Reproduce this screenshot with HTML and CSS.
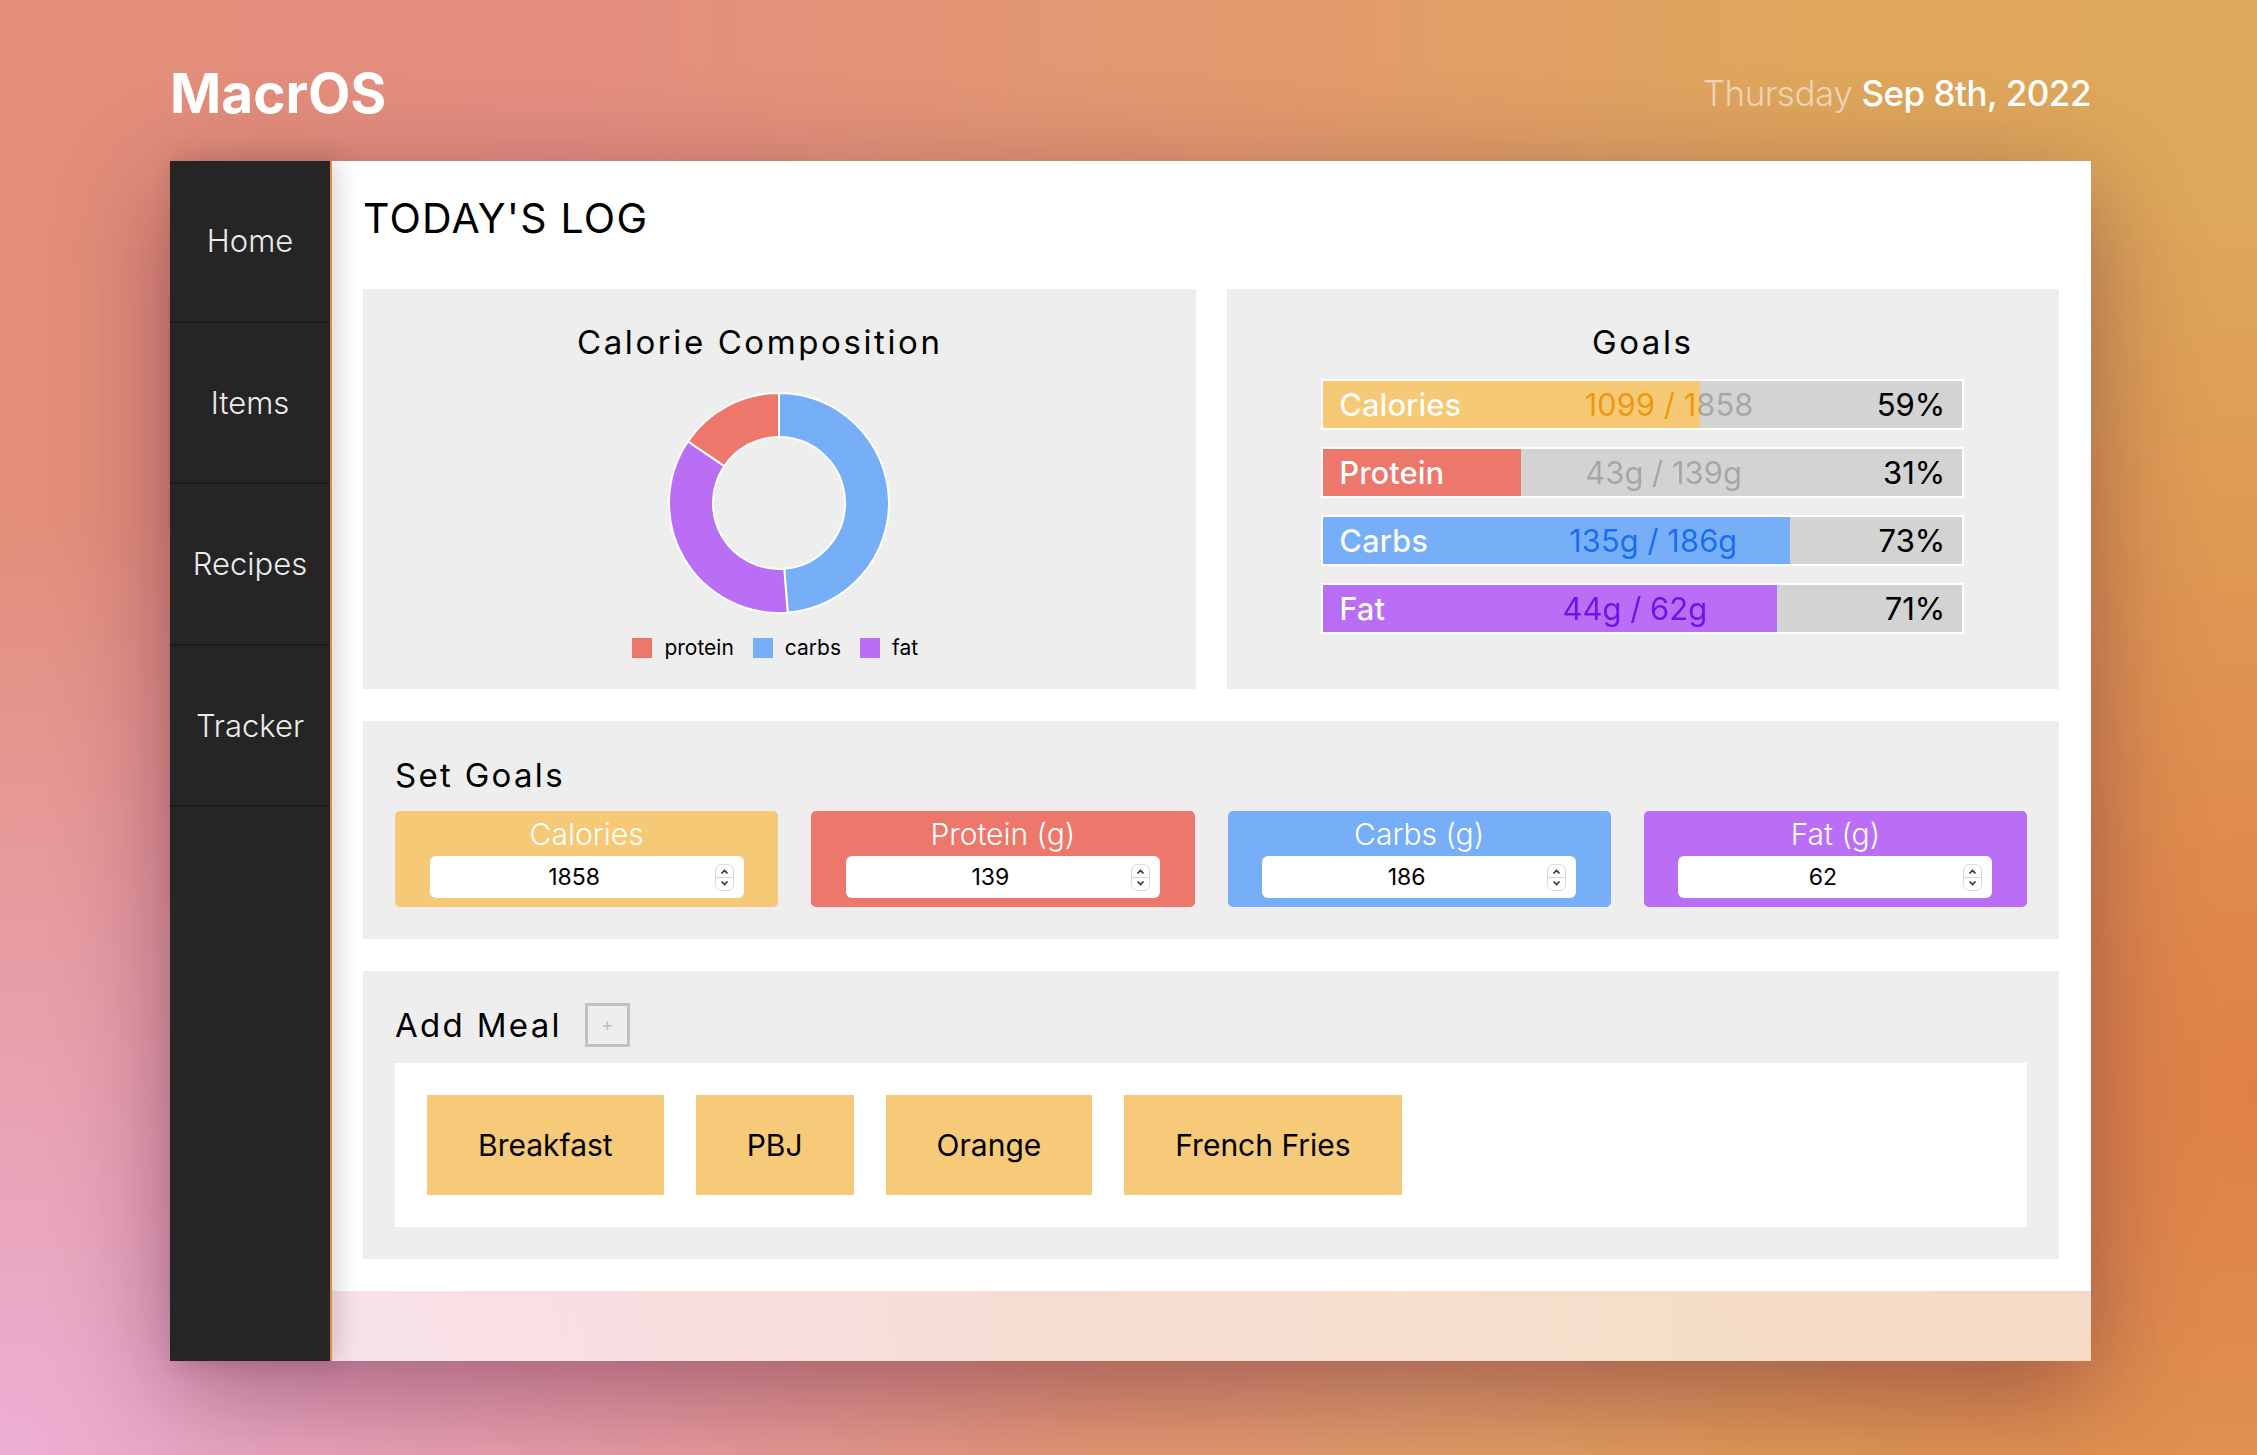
FILE: index.html
```html
<!DOCTYPE html>
<html lang="en">
<head>
<meta charset="utf-8">
<title>MacrOS</title>
<link rel="stylesheet" href="styles.css">
</head>
<body>
<div class="page">
  <header class="top">
    <div class="brand">MacrOS</div>
    <div class="date"><span class="day">Thursday</span> <span class="dt">Sep 8th, 2022</span></div>
  </header>
  <div class="card">
    <nav class="sidebar">
      <a class="nav-item">Home</a>
      <a class="nav-item">Items</a>
      <a class="nav-item">Recipes</a>
      <a class="nav-item">Tracker</a>
    </nav>
    <main class="main">
      <h1 class="page-title">TODAY'S LOG</h1>
      <div class="top-grid">
        <section class="panel chart-panel">
          <h2 class="panel-title chart-title">Calorie Composition</h2>
          <svg class="donut" width="224" height="224" viewBox="0 0 224 224">
            <path fill="#76aff8" stroke="#fff" stroke-width="2" d="M112 2 A110 110 0 0 1 120.72 221.65 L117.23 177.79 A66 66 0 0 0 112 46 Z"/>
            <path fill="#b96ef5" stroke="#fff" stroke-width="2" d="M120.72 221.65 A110 110 0 0 1 20.91 50.33 L57.35 75.0 A66 66 0 0 0 117.23 177.79 Z"/>
            <path fill="#ee776b" stroke="#fff" stroke-width="2" d="M20.91 50.33 A110 110 0 0 1 112 2 L112 46 A66 66 0 0 0 57.35 75.0 Z"/>
          </svg>
          <div class="legend">
            <span class="lg"><i class="sw sw-protein"></i>protein</span>
            <span class="lg"><i class="sw sw-carbs"></i>carbs</span>
            <span class="lg"><i class="sw sw-fat"></i>fat</span>
          </div>
        </section>
        <section class="panel goals-panel">
          <h2 class="panel-title">Goals</h2>
          <div class="bars">
            <div class="bar b-cal" style="--p:59%">
              <div class="bar-fill"></div>
              <div class="bar-row"><span class="bl">Calories</span><span class="bv">1099 / 1858</span><span class="bp">59%</span></div>
            </div>
            <div class="bar b-pro" style="--p:31%">
              <div class="bar-fill"></div>
              <div class="bar-row"><span class="bl">Protein</span><span class="bv">43g / 139g</span><span class="bp">31%</span></div>
            </div>
            <div class="bar b-carb" style="--p:73%">
              <div class="bar-fill"></div>
              <div class="bar-row"><span class="bl">Carbs</span><span class="bv">135g / 186g</span><span class="bp">73%</span></div>
            </div>
            <div class="bar b-fat" style="--p:71%">
              <div class="bar-fill"></div>
              <div class="bar-row"><span class="bl">Fat</span><span class="bv">44g / 62g</span><span class="bp">71%</span></div>
            </div>
          </div>
        </section>
      </div>

      <section class="panel set-panel">
        <h2 class="section-title">Set Goals</h2>
        <div class="goal-grid">
          <div class="goal-card c-cal">
            <div class="goal-label">Calories</div>
            <div class="field"><span class="fv">1858</span><span class="spin"><svg width="19" height="27" viewBox="0 0 19 27"><rect x="0.5" y="0.5" width="18" height="26" rx="6" fill="#fff" stroke="#d6d6d6"/><line x1="1" y1="13.5" x2="18" y2="13.5" stroke="#d6d6d6"/><path d="M6.5 9.5 L9.5 6.5 L12.5 9.5" fill="none" stroke="#333" stroke-width="1.6"/><path d="M6.5 17.5 L9.5 20.5 L12.5 17.5" fill="none" stroke="#333" stroke-width="1.6"/></svg></span></div>
          </div>
          <div class="goal-card c-pro">
            <div class="goal-label">Protein (g)</div>
            <div class="field"><span class="fv">139</span><span class="spin"><svg width="19" height="27" viewBox="0 0 19 27"><rect x="0.5" y="0.5" width="18" height="26" rx="6" fill="#fff" stroke="#d6d6d6"/><line x1="1" y1="13.5" x2="18" y2="13.5" stroke="#d6d6d6"/><path d="M6.5 9.5 L9.5 6.5 L12.5 9.5" fill="none" stroke="#333" stroke-width="1.6"/><path d="M6.5 17.5 L9.5 20.5 L12.5 17.5" fill="none" stroke="#333" stroke-width="1.6"/></svg></span></div>
          </div>
          <div class="goal-card c-carb">
            <div class="goal-label">Carbs (g)</div>
            <div class="field"><span class="fv">186</span><span class="spin"><svg width="19" height="27" viewBox="0 0 19 27"><rect x="0.5" y="0.5" width="18" height="26" rx="6" fill="#fff" stroke="#d6d6d6"/><line x1="1" y1="13.5" x2="18" y2="13.5" stroke="#d6d6d6"/><path d="M6.5 9.5 L9.5 6.5 L12.5 9.5" fill="none" stroke="#333" stroke-width="1.6"/><path d="M6.5 17.5 L9.5 20.5 L12.5 17.5" fill="none" stroke="#333" stroke-width="1.6"/></svg></span></div>
          </div>
          <div class="goal-card c-fat">
            <div class="goal-label">Fat (g)</div>
            <div class="field"><span class="fv">62</span><span class="spin"><svg width="19" height="27" viewBox="0 0 19 27"><rect x="0.5" y="0.5" width="18" height="26" rx="6" fill="#fff" stroke="#d6d6d6"/><line x1="1" y1="13.5" x2="18" y2="13.5" stroke="#d6d6d6"/><path d="M6.5 9.5 L9.5 6.5 L12.5 9.5" fill="none" stroke="#333" stroke-width="1.6"/><path d="M6.5 17.5 L9.5 20.5 L12.5 17.5" fill="none" stroke="#333" stroke-width="1.6"/></svg></span></div>
          </div>
        </div>
      </section>

      <section class="panel meal-panel">
        <div class="meal-head">
          <h2 class="section-title">Add Meal</h2>
          <button class="plus-btn">+</button>
        </div>
        <div class="meal-box">
          <button class="meal">Breakfast</button>
          <button class="meal">PBJ</button>
          <button class="meal">Orange</button>
          <button class="meal">French Fries</button>
        </div>
      </section>
    </main>
  </div>
</div>
</body>
</html>
```

FILE: styles.css
```css
* { box-sizing: border-box; }

html, body {
  margin: 0;
  padding: 0;
}

body {
  width: 2257px;
  height: 1455px;
  overflow: hidden;
  font-family: Inter, "Noto Sans", "Liberation Sans", sans-serif;
  background:
    radial-gradient(ellipse 1100px 950px at 0% 100%, rgba(236, 174, 212, 1) 0%, rgba(236, 174, 212, 0) 100%),
    radial-gradient(ellipse 900px 900px at 100% 75%, rgba(224, 128, 72, 1) 0%, rgba(224, 128, 72, 0) 100%),
    linear-gradient(90deg, #e28e78 0%, #e48e80 25%, #e39a6e 55%, #dfa65c 80%, #dea95a 100%);
}

.page {
  width: 1921px;
  margin-left: 170px;
}

.top {
  height: 161px;
  padding-top: 25px;
  display: flex;
  align-items: center;
  justify-content: space-between;
}

.brand {
  color: #fff;
  font-size: 55px;
  font-weight: 700;
}

.date {
  font-size: 35px;
  letter-spacing: -0.5px;
  color: #fff;
}

.date .day {
  font-weight: 300;
  color: rgba(255, 255, 255, 0.55);
}

.date .dt {
  font-weight: 500;
}

.card {
  display: flex;
  height: 1200px;
  background: rgba(255, 255, 255, 0.68);
  box-shadow: 0 30px 100px rgba(80, 20, 60, 0.45);
}

.sidebar {
  position: relative;
  z-index: 2;
  width: 162px;
  flex: none;
  background: #252525;
  border-right: 2px solid #ec8a3a;
  box-shadow: 6px 0 22px rgba(0, 0, 0, 0.16);
  display: flex;
  flex-direction: column;
}

.nav-item {
  height: 161.6px;
  display: flex;
  align-items: center;
  justify-content: center;
  color: #ececec;
  font-size: 31px;
  font-weight: 300;
  border-bottom: 2px solid #1b1b1b;
}

.main {
  flex: 1;
  align-self: flex-start;
  background: #fff;
  padding: 32px 32px 32px 31px;
}

.page-title {
  margin: 0 0 46px;
  font-size: 41px;
  line-height: 50px;
  font-weight: 400;
  letter-spacing: 1.2px;
  color: #000;
}

.top-grid {
  display: grid;
  grid-template-columns: 1fr 1fr;
  gap: 31px;
  height: 400px;
}

.panel {
  background: #eeeeee;
}

.chart-panel,
.goals-panel {
  padding-top: 33px;
  display: flex;
  flex-direction: column;
  align-items: center;
}

.panel-title {
  margin: 0;
  font-size: 33px;
  line-height: 40px;
  font-weight: 400;
  letter-spacing: 2.6px;
  color: #000;
}

.chart-title {
  padding-right: 39px;
}

.donut {
  display: block;
  margin-top: 29px;
}

.legend {
  display: flex;
  align-items: center;
  gap: 19px;
  margin-top: 20px;
  margin-right: 8px;
  font-size: 21px;
  color: #000;
}

.lg {
  display: flex;
  align-items: center;
  gap: 12px;
}

.sw {
  width: 20px;
  height: 20px;
  display: block;
}

.sw-protein { background: #ee776b; }
.sw-carbs { background: #76aff8; }
.sw-fat { background: #b96ef5; }

.bars {
  margin-top: 17px;
  display: flex;
  flex-direction: column;
  gap: 17px;
}

.bar {
  position: relative;
  width: 643px;
  height: 51px;
  border: 2px solid #fff;
  background: #d3d3d3;
}

.bar-fill {
  position: absolute;
  top: 0;
  left: 0;
  height: 47px;
  width: var(--p);
}

.bar-row {
  position: relative;
  width: 639px;
  height: 47px;
  display: flex;
  align-items: center;
  justify-content: space-between;
  padding: 0 17px 0 16px;
  font-size: 31px;
  line-height: 47px;
  color: transparent;
  -webkit-background-clip: text;
  background-clip: text;
}

.bl {
  color: #fff;
  font-weight: 550;
}

.bp {
  color: #000;
}

.b-cal .bar-fill { background: #f6c977; }
.b-pro .bar-fill { background: #ee776b; }
.b-carb .bar-fill { background: #76aff8; }
.b-fat .bar-fill { background: #b96ef5; }

.b-cal .bar-row { background-image: linear-gradient(90deg, #ef960c 0, #ef960c var(--p), #a6a6a6 var(--p), #a6a6a6 100%); }
.b-pro .bar-row { background-image: linear-gradient(90deg, #d8453a 0, #d8453a var(--p), #a6a6a6 var(--p), #a6a6a6 100%); }
.b-carb .bar-row { background-image: linear-gradient(90deg, #1a6cf2 0, #1a6cf2 var(--p), #a6a6a6 var(--p), #a6a6a6 100%); }
.b-fat .bar-row { background-image: linear-gradient(90deg, #7410ea 0, #7410ea var(--p), #a6a6a6 var(--p), #a6a6a6 100%); }

.c-cal { background: #f6c977; }
.c-pro { background: #ee776b; }
.c-carb { background: #76aff8; }
.c-fat { background: #b96ef5; }

.set-panel {
  margin-top: 32px;
  padding: 34px 32px 32px;
}

.section-title {
  margin: 0;
  font-size: 33px;
  line-height: 40px;
  font-weight: 400;
  letter-spacing: 2.3px;
  color: #000;
}

.goal-grid {
  margin-top: 16px;
  display: grid;
  grid-template-columns: repeat(4, 1fr);
  gap: 33px;
}

.goal-card {
  border-radius: 5px;
  padding: 5px 0 9px;
  display: flex;
  flex-direction: column;
  align-items: center;
}

.goal-label {
  color: #fff;
  font-size: 30px;
  line-height: 36px;
  font-weight: 300;
}

.field {
  margin-top: 4px;
  width: 314px;
  height: 42px;
  background: #fff;
  border-radius: 6px;
  display: flex;
  align-items: center;
  padding: 0 10px 0 4px;
}

.fv {
  flex: 1;
  text-align: center;
  font-size: 23px;
  color: #000;
}

.spin {
  display: block;
  width: 19px;
  height: 27px;
}

.spin svg {
  display: block;
}

.meal-panel {
  margin-top: 32px;
  padding: 32px;
}

.meal-head {
  display: flex;
  align-items: center;
  gap: 23px;
  height: 44px;
}

.plus-btn {
  width: 45px;
  height: 44px;
  border: 3px solid #c2c2c2;
  background: transparent;
  color: #bdbdbd;
  font-family: inherit;
  font-size: 18px;
  padding: 0;
  line-height: 1;
}

.meal-box {
  margin-top: 16px;
  background: #fff;
  padding: 32px;
  display: flex;
  gap: 32px;
}

.meal {
  height: 100px;
  padding: 0 51px;
  border: none;
  background: #f6ca78;
  font-family: inherit;
  font-size: 30px;
  color: #000;
}
```
